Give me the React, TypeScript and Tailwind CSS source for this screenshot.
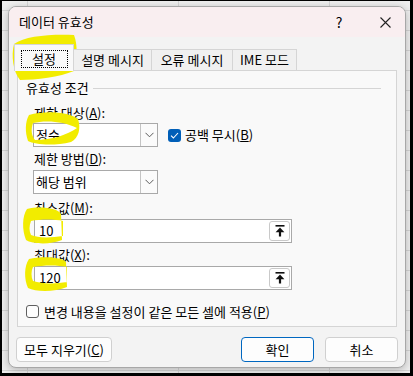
import React from "react"

const font = { fontFamily: '"Noto Sans CJK KR", "Noto Sans", sans-serif' }

function Chevron() {
  return (
    <svg width="9" height="6" viewBox="0 0 9 6">
      <path d="M0.5 0.8 L4.5 4.8 L8.5 0.8" fill="none" stroke="#5a5a5a" strokeWidth="1" />
    </svg>
  )
}

function UpIcon() {
  return (
    <svg width="10" height="12" viewBox="0 0 10 12">
      <rect x="0.5" y="0" width="9" height="1.6" fill="#111" />
      <path d="M0.6 7.2 L5 2.6 L9.4 7.2 Z" fill="#111" />
      <rect x="3.9" y="6" width="2.2" height="5.5" fill="#111" />
    </svg>
  )
}

function Combo({ value }: { value: string }) {
  return (
    <div className="flex h-[24px] w-[125px] border border-[#a9a9a9] bg-white">
      <div className="flex flex-1 items-center pl-[2px] text-[13px] text-black">{value}</div>
      <div className="flex w-[17px] items-center justify-center border-l border-[#c4c4c4] bg-[#fbfbfb]">
        <Chevron />
      </div>
    </div>
  )
}

function RefInput({ value }: { value: string }) {
  return (
    <div className="flex h-[24px] w-[258px] items-center border border-[#a9a9a9] bg-white pl-[4px] pr-[1px]">
      <span className="flex-1 text-[13px] text-black">{value}</span>
      <div className="flex h-[20px] w-[21px] items-center justify-center rounded-[3px] border border-[#c9c9c9] bg-white">
        <UpIcon />
      </div>
    </div>
  )
}

function Label({ children }: { children: React.ReactNode }) {
  return <div className="h-[16px] text-[13px] leading-[16px] text-black">{children}</div>
}

function Marks() {
  const y = "#f2ec00"
  return (
    <svg className="pointer-events-none absolute left-0 top-0" width="413" height="376" viewBox="0 0 413 376">
      <path
        fillRule="evenodd"
        fill={y}
        d="M14 44 C25 36 50 34 74 35 C78 45 77 60 74 71 C60 77 36 80 20 80 C13 72 11 55 14 44 Z M19 48.5 H67 V67.5 H19 Z"
      />
      <path
        fillRule="evenodd"
        fill={y}
        d="M29 115 C45 110 70 112 78 119 C81 128 79 138 71 142 C55 146 35 145 28 141 C25 132 25 122 29 115 Z M33 123 C45 120 64 121 77 128 C67 135 52 140 35 140 C31 135 31 129 33 123 Z"
      />
      <path
        fillRule="evenodd"
        fill={y}
        d="M27 209 C40 206 58 208 61 214 L62 240 C50 245 32 244 26 240 C22 230 22 216 27 209 Z M31 221 C40 219 55 219 63 221 L63 236 C50 238 38 238 31 235 C29 231 29 226 31 221 Z"
      />
      <path
        fillRule="evenodd"
        fill={y}
        d="M29 259 C42 256 62 257 66 262 L67 287 C55 292 36 292 28 288 C24 279 24 266 29 259 Z M33 267 C44 265 58 265 67 267 L67 282 C55 284 42 284 33 281 C31 277 31 271 33 267 Z"
      />
    </svg>
  )
}

export default function App() {
  return (
    <div className="relative h-[376px] w-[413px] bg-black pb-[3px] pl-[2px] pr-[3px] pt-[1px]" style={font}>
      <div className="h-full w-full bg-[#efefef] bg-[linear-gradient(#d6d6d6_1px,transparent_1px),linear-gradient(90deg,#d6d6d6_1px,transparent_1px)] pl-[6px] pt-[5px] [background-position:25px_9px] [background-size:151px_20px]">
        <div className="flex h-[362px] w-[398px] flex-col overflow-hidden rounded-[8px] border border-[#a7a7a7] bg-[#f3f3f3] shadow-[0_2px_8px_rgba(0,0,0,0.25)]">
          {/* title bar */}
          <div className="flex h-[30px] items-center bg-[#f9eef0] pl-[10px]">
            <span className="flex-1 text-[13px] text-black">데이터 유효성</span>
            <span className="mr-[6px] flex w-[40px] items-center justify-center text-[14px] text-black">?</span>
            <span className="flex w-[40px] items-center justify-center">
              <svg width="11" height="11" viewBox="0 0 11 11">
                <path d="M0.5 0.5 L10.5 10.5 M10.5 0.5 L0.5 10.5" stroke="#222" strokeWidth="1.1" />
              </svg>
            </span>
          </div>

          <div className="flex flex-1 flex-col px-[8px]">
            {/* tabs */}
            <div className="relative z-10 ml-[-3px] mt-[7px] flex h-[27px] items-end">
              <div className="flex h-[27px] w-[60px] items-start justify-center border border-b-0 border-[#d5d5d5] bg-[#f9f9f9] pt-[5px]">
                <div className="flex h-[18px] w-[47px] items-center justify-center border border-dotted border-black text-[13px] text-black">
                  설정
                </div>
              </div>
              <div className="flex h-[22px] w-[78px] items-center justify-center border border-l-0 border-[#d5d5d5] bg-[#f0f0f0] text-[13px] text-black">
                설명 메시지
              </div>
              <div className="flex h-[22px] w-[81px] items-center justify-center border border-l-0 border-[#d5d5d5] bg-[#f0f0f0] text-[13px] text-black">
                오류 메시지
              </div>
              <div className="flex h-[22px] w-[64px] items-center justify-center border border-l-0 border-[#d5d5d5] bg-[#f0f0f0] text-[13px] text-black">
                IME 모드
              </div>
            </div>

            {/* panel */}
            <div className="mt-[-1px] flex h-[257px] flex-col border border-[#d5d5d5] bg-[#f9f9f9] pl-[8px] pt-[9px]">
              <div className="flex h-[16px] items-center gap-[4px]">
                <span className="text-[13px] leading-[16px] text-black">유효성 조건</span>
                <div className="mr-[15px] h-px flex-1 bg-[#d5d5d5]" />
              </div>
              <div className="ml-[8px] mt-[9px]">
                <Label>
                  제한 대상(<u>A</u>):
                </Label>
              </div>
              <div className="ml-[7px] mt-[2px] flex items-center">
                <Combo value="정수" />
                <div className="ml-[10px] flex h-[13px] w-[13px] items-center justify-center rounded-[3px] bg-[#005fb8]">
                  <svg width="9" height="7" viewBox="0 0 9 7">
                    <path d="M1 3.6 L3.4 6 L8 1" fill="none" stroke="white" strokeWidth="1.1" />
                  </svg>
                </div>
                <span className="ml-[4px] text-[13px] text-black">
                  공백 무시(<u>B</u>)
                </span>
              </div>
              <div className="ml-[8px] mt-[4px]">
                <Label>
                  제한 방법(<u>D</u>):
                </Label>
              </div>
              <div className="ml-[7px] mt-[3px]">
                <Combo value="해당 범위" />
              </div>
              <div className="ml-[8px] mt-[6px]">
                <Label>
                  최소값(<u>M</u>):
                </Label>
              </div>
              <div className="ml-[8px] mt-[3px]">
                <RefInput value="10" />
              </div>
              <div className="ml-[8px] mt-[4px]">
                <Label>
                  최대값(<u>X</u>):
                </Label>
              </div>
              <div className="ml-[8px] mt-[3px]">
                <RefInput value="120" />
              </div>
              <div className="mt-[12px] flex items-center">
                <div className="h-[13px] w-[13px] rounded-[3px] border border-[#5f5f5f] bg-[#fdfdfd]" />
                <span className="ml-[5px] text-[13px] text-black">
                  변경 내용을 설정이 같은 모든 셀에 적용(<u>P</u>)
                </span>
              </div>
            </div>

            {/* buttons */}
            <div className="mt-[10px] flex items-center">
              <button className="ml-[-1px] h-[25px] w-[96px] rounded-[4px] border border-[#d0d0d0] bg-[#fdfdfd] text-[13px] text-black">
                모두 지우기(<u>C</u>)
              </button>
              <button className="ml-auto h-[25px] w-[73px] rounded-[4px] border border-[#0067c0] bg-[#fdfdfd] text-[13px] text-black">
                확인
              </button>
              <button className="ml-[11px] mr-[-1px] h-[25px] w-[73px] rounded-[4px] border border-[#d0d0d0] bg-[#fdfdfd] text-[13px] text-black">
                취소
              </button>
            </div>
          </div>
        </div>
      </div>
      <Marks />
    </div>
  )
}
